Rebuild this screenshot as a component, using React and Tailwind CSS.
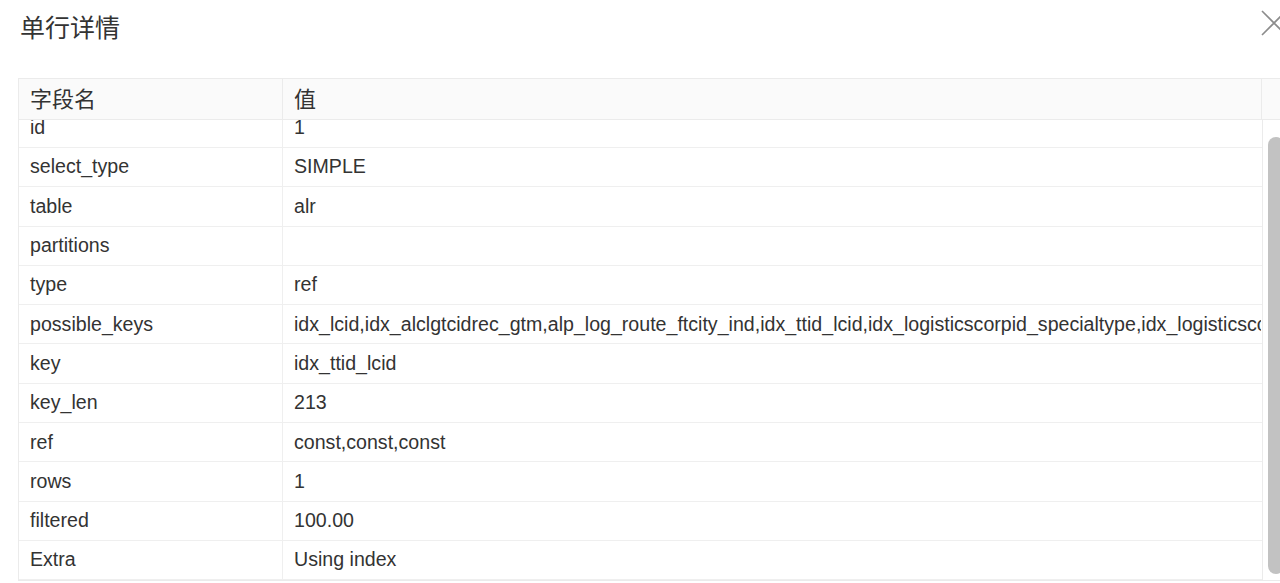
const rows = [
  { field: 'id', value: '1' },
  { field: 'select_type', value: 'SIMPLE' },
  { field: 'table', value: 'alr' },
  { field: 'partitions', value: '' },
  { field: 'type', value: 'ref' },
  {
    field: 'possible_keys',
    value:
      'idx_lcid,idx_alclgtcidrec_gtm,alp_log_route_ftcity_ind,idx_ttid_lcid,idx_logisticscorpid_specialtype,idx_logisticscorpid_mailno,idx_mailno',
  },
  { field: 'key', value: 'idx_ttid_lcid' },
  { field: 'key_len', value: '213' },
  { field: 'ref', value: 'const,const,const' },
  { field: 'rows', value: '1' },
  { field: 'filtered', value: '100.00' },
  { field: 'Extra', value: 'Using index' },
];

const font = { fontFamily: '"Liberation Sans", Arial, "Noto Sans CJK SC", sans-serif' };

export default function App() {
  return (
    <div className="relative w-[1280px] h-[583px] overflow-hidden bg-white text-[#333]" style={font}>
      {/* Header */}
      <div className="flex items-center h-[56px] pl-[20px]">
        <h1 className="text-[25px] leading-none font-normal text-[#333]">单行详情</h1>
      </div>
      <button className="absolute left-[1261px] top-[10px] w-[26px] h-[26px] text-[#8c8c8c]">
        <svg viewBox="0 0 26 26" className="w-[26px] h-[26px]" fill="none" stroke="currentColor" strokeWidth="1.6">
          <path d="M1 1 L25 25 M25 1 L1 25" />
        </svg>
      </button>

      {/* Table */}
      <div className="mt-[22px] ml-[18px] w-[1290px] border border-[#ebebeb] text-[19.6px]">
        <div className="flex h-[41px] bg-[#fafafa] border-b border-[#ebebeb]">
          <div className="w-[264px] shrink-0 flex items-center pl-[11px] border-r border-[#ebebeb] text-[22px]">字段名</div>
          <div className="w-[979px] shrink-0 flex items-center pl-[11px] border-r border-[#ebebeb] text-[22px]">值</div>
          <div className="flex-1" />
        </div>
        <div className="flex h-[460px] overflow-hidden">
          <div className="w-[1244px] shrink-0 border-r border-[#ebebeb] overflow-hidden">
            <div className="-mt-[11.3px]">
              {rows.map((r) => (
                <div key={r.field} className="flex h-[39.3px] border-b border-[#efefef]">
                  <div className="w-[264px] shrink-0 flex items-center pl-[11px] border-r border-[#efefef]">
                    {r.field}
                  </div>
                  <div className="w-[978px] shrink-0 flex items-center pl-[11px] pr-[4px] overflow-hidden whitespace-nowrap">
                    {r.value}
                  </div>
                </div>
              ))}
            </div>
          </div>
          <div className="flex-1 pl-[5px] pt-[17px]">
            <div className="w-[16px] h-[437px] rounded-full bg-[#c2c2c2]" />
          </div>
        </div>
      </div>
    </div>
  );
}
